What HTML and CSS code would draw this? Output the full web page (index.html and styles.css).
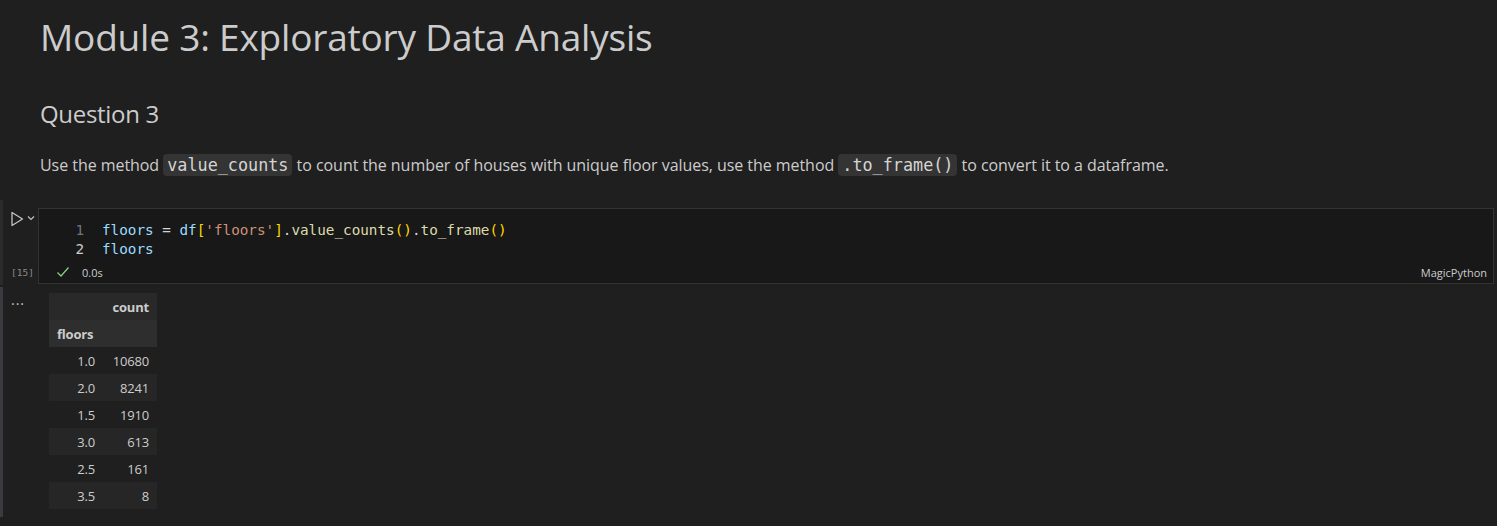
FILE: index.html
```html
<!DOCTYPE html>
<html>
<head>
<meta charset="utf-8">
<link rel="stylesheet" href="styles.css">
</head>
<body>
<div class="notebook">
  <section class="md-cell">
    <h1 class="h1">Module 3: Exploratory Data Analysis</h1>
    <h2 class="h2">Question 3</h2>
    <p class="para">Use the method <code class="ic">value_counts</code> to count the number of houses with unique floor values, use the method <code class="ic">.to_frame()</code> to convert it to a dataframe.</p>
  </section>

  <section class="code-cell">
    <div class="cell-row">
      <div class="gutter">
        <div class="run">
          <svg width="14" height="16" viewBox="0 0 14 16"><path d="M2 1.5 L12.5 8 L2 14.5 Z" fill="none" stroke="#c5c5c5" stroke-width="1.3" stroke-linejoin="round"/></svg>
          <svg class="chev" width="8" height="6" viewBox="0 0 8 6"><path d="M1 1.5 L4 4.5 L7 1.5" fill="none" stroke="#c5c5c5" stroke-width="1.1"/></svg>
        </div>
        <div class="exec">[15]</div>
      </div>
      <div class="editor">
        <div class="lines">
          <div class="line"><span class="ln">1</span><span class="v">floors</span> <span class="op">=</span> <span class="v">df</span><span class="br">[</span><span class="s">'floors'</span><span class="br">]</span><span class="op">.</span><span class="f">value_counts</span><span class="br">()</span><span class="op">.</span><span class="f">to_frame</span><span class="br">()</span></div>
          <div class="line"><span class="ln ln-act">2</span><span class="v">floors</span></div>
        </div>
        <div class="status">
          <span class="ok"><svg width="14" height="12" viewBox="0 0 14 12"><path d="M1.5 6.5 L5 10 L12.5 1.5" fill="none" stroke="#89d185" stroke-width="1.2"/></svg><span class="time">0.0s</span></span>
          <span class="lang">MagicPython</span>
        </div>
      </div>
    </div>
    <div class="out-row">
      <div class="gutter"><div class="dots">···</div></div>
      <div class="output">
        <table class="df">
          <thead>
            <tr class="hr1"><th></th><th class="r">count</th></tr>
            <tr class="hr2"><th class="l">floors</th><th></th></tr>
          </thead>
          <tbody>
            <tr><td>1.0</td><td>10680</td></tr>
            <tr class="alt"><td>2.0</td><td>8241</td></tr>
            <tr><td>1.5</td><td>1910</td></tr>
            <tr class="alt"><td>3.0</td><td>613</td></tr>
            <tr><td>2.5</td><td>161</td></tr>
            <tr class="alt"><td>3.5</td><td>8</td></tr>
          </tbody>
        </table>
      </div>
    </div>
  </section>
</div>
</body>
</html>
```

FILE: styles.css
```css
html, body {
  margin: 0;
  padding: 0;
  background: #1f1f1f;
  color: #cccccc;
  font-family: "Open Sans", "Noto Sans", sans-serif;
}
.notebook {
  display: flex;
  flex-direction: column;
}
.md-cell {
  padding-left: 40px;
  padding-top: 12px;
}
.h1 {
  margin: 0;
  font-weight: 400;
  font-size: 37px;
  line-height: 50px;
  color: #cccccc;
  letter-spacing: -0.2px;
}
.h2 {
  margin: 36px 0 0 0;
  font-weight: 400;
  font-size: 24px;
  line-height: 32px;
  color: #cccccc;
  letter-spacing: -0.3px;
}
.para {
  margin: 24px 0 0 0;
  font-size: 16px;
  line-height: 22px;
  color: #cccccc;
  letter-spacing: -0.05px;
}
.ic {
  font-family: "DejaVu Sans Mono", monospace;
  font-size: 16.8px;
  background: #343434;
  border-radius: 4px;
  padding: 1px 4px;
  color: #d4d4d4;
  letter-spacing: 0;
}
.code-cell {
  margin-top: 24px;
}
.cell-row {
  display: flex;
  border-left: 3px solid #2b2b2b;
  height: 85px;
  box-sizing: border-box;
}
.gutter {
  width: 35px;
  flex: none;
  display: flex;
  flex-direction: column;
  justify-content: space-between;
}
.run {
  display: flex;
  align-items: center;
  padding: 11px 0 0 7px;
  gap: 3px;
}
.chev {
  margin-top: -2px;
}
.exec {
  font-family: "DejaVu Sans Mono", monospace;
  font-size: 9.5px;
  color: #8a8a8a;
  padding: 0 0 7px 8px;
}
.editor {
  flex: 1;
  margin-right: 3px;
  background: #181818;
  border: 1px solid #333333;
  height: 76px;
  box-sizing: border-box;
  display: flex;
  flex-direction: column;
  margin-top: 8px;
}
.lines {
  padding-top: 12px;
  font-family: "DejaVu Sans Mono", monospace;
  font-size: 14.3px;
  line-height: 19px;
}
.line {
  white-space: pre;
  color: #d4d4d4;
}
.ln {
  display: inline-block;
  width: 63px;
  text-align: right;
  padding-right: 18px;
  box-sizing: border-box;
  color: #6e7681;
}
.ln-act { color: #cccccc; }
.v { color: #9cdcfe; }
.op { color: #d4d4d4; }
.br { color: #ffd700; }
.s { color: #ce9178; }
.f { color: #dcdcaa; }
.status {
  margin-top: auto;
  display: flex;
  justify-content: space-between;
  align-items: center;
  padding: 0 6px 2px 17px;
  height: 18px;
  font-size: 11px;
}
.ok {
  display: flex;
  align-items: center;
  gap: 12px;
}
.time { color: #cccccc; }
.lang { color: #cccccc; }
.out-row {
  display: flex;
  border-left: 3px solid #3a3a3f;
  margin-top: 2px;
  padding-bottom: 8px;
}
.dots {
  font-size: 14px;
  color: #c5c5c5;
  padding: 10px 0 0 8px;
  letter-spacing: 1px;
  line-height: 14px;
}
.output {
  padding: 6px 0 0 11px;
}
.df {
  border-collapse: collapse;
  font-size: 13px;
  color: #cccccc;
  letter-spacing: -0.2px;
}
.df th, .df td {
  height: 27px;
  padding: 0 8px;
  text-align: right;
}
.df th { font-weight: 700; }
.df th.l { text-align: left; }
.hr1 { background: #292929; }
.hr2 { background: #2e2e2e; }
.df td:first-child { width: 38px; }
.df td:last-child { width: 38px; }
.alt { background: #262626; }
```
